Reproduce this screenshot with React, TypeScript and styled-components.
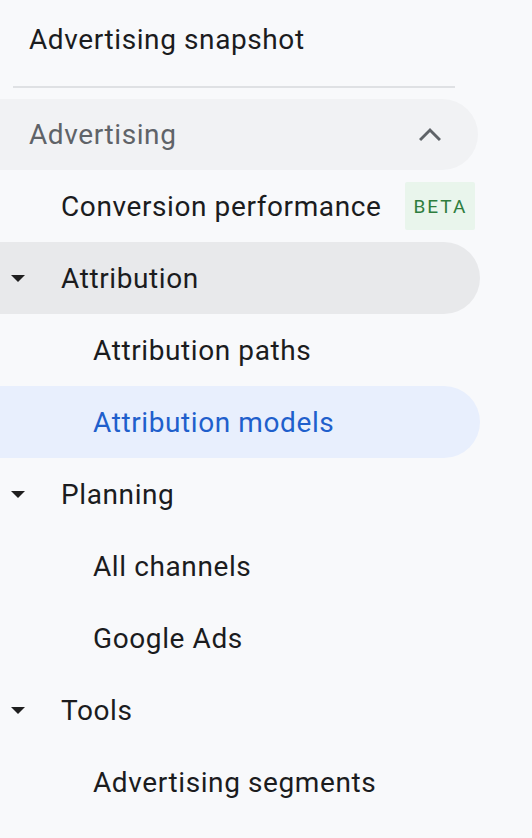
import React from "react";
import styled, { createGlobalStyle } from "styled-components";

const GlobalStyle = createGlobalStyle`
  html, body {
    margin: 0;
    padding: 0;
    background: #f8f9fb;
  }

  body {
    font-family: Roboto, "Noto Sans", Arial, sans-serif;
    letter-spacing: 0.6px;
    -webkit-font-smoothing: antialiased;
  }
`;

const Page = styled.div`
  min-height: 100vh;
  background: #f8f9fb;
  overflow: hidden;
`;

const Nav = styled.nav`
  display: flex;
  flex-direction: column;
  width: 480px;
`;

const Title = styled.div`
  display: flex;
  align-items: center;
  height: 78px;
  padding-left: 29px;
  font-size: 28px;
  color: #1b1c1e;
`;

const Divider = styled.hr`
  margin: 8px 0 0 13px;
  width: 442px;
  height: 2px;
  border: none;
  background: #dfe1e4;
`;

const GroupHeader = styled.div`
  display: flex;
  align-items: center;
  justify-content: space-between;
  height: 71px;
  margin-top: 11px;
  padding: 0 37px 0 29px;
  width: 478px;
  box-sizing: border-box;
  background: #f1f2f4;
  border-radius: 0 36px 36px 0;
  font-size: 28px;
  color: #5f6368;
`;

type RowVariant = "plain" | "open" | "selected";

const Row = styled.div<{ $variant: RowVariant; $level: number }>`
  display: flex;
  align-items: center;
  height: 72px;
  padding-left: ${({ $level }) => ($level === 2 ? 93 : 61)}px;
  box-sizing: border-box;
  position: relative;
  border-radius: 0 36px 36px 0;
  font-size: 28px;
  background: ${({ $variant }) =>
    $variant === "open" ? "#e8e9eb" : $variant === "selected" ? "#e8effd" : "transparent"};
  color: ${({ $variant }) => ($variant === "selected" ? "#1f5fcc" : "#1b1c1e")};
`;

const Caret = styled.span`
  position: absolute;
  left: 11px;
  top: 50%;
  width: 0;
  height: 0;
  margin-top: -3px;
  border-left: 7px solid transparent;
  border-right: 7px solid transparent;
  border-top: 7px solid #1f1f1f;
`;

const Badge = styled.span`
  display: flex;
  align-items: center;
  justify-content: center;
  width: 70px;
  height: 48px;
  margin-left: 24px;
  border-radius: 2px;
  background: #e9f5ec;
  color: #2e7d3e;
  font-size: 19px;
  letter-spacing: 2px;
`;

const ChevronUp = () => (
  <svg width="22" height="22" viewBox="0 0 22 22" fill="none">
    <path d="M1 16 L11 6 L21 16" stroke="#5f6368" strokeWidth="3" />
  </svg>
);

type Item = {
  label: string;
  level: number;
  variant?: RowVariant;
  caret?: boolean;
  badge?: string;
};

const items: Item[] = [
  { label: "Conversion performance", level: 1, badge: "BETA" },
  { label: "Attribution", level: 1, variant: "open", caret: true },
  { label: "Attribution paths", level: 2 },
  { label: "Attribution models", level: 2, variant: "selected" },
  { label: "Planning", level: 1, caret: true },
  { label: "All channels", level: 2 },
  { label: "Google Ads", level: 2 },
  { label: "Tools", level: 1, caret: true },
  { label: "Advertising segments", level: 2 },
];

const App = () => {
  return (
    <>
      <GlobalStyle />
      <Page>
        <Nav>
          <Title>Advertising snapshot</Title>
          <Divider />
          <GroupHeader>
            Advertising
            <ChevronUp />
          </GroupHeader>
          {items.map((item) => (
            <Row key={item.label} $variant={item.variant ?? "plain"} $level={item.level}>
              {item.caret && <Caret />}
              {item.label}
              {item.badge && <Badge>{item.badge}</Badge>}
            </Row>
          ))}
        </Nav>
      </Page>
    </>
  );
};

export default App;
